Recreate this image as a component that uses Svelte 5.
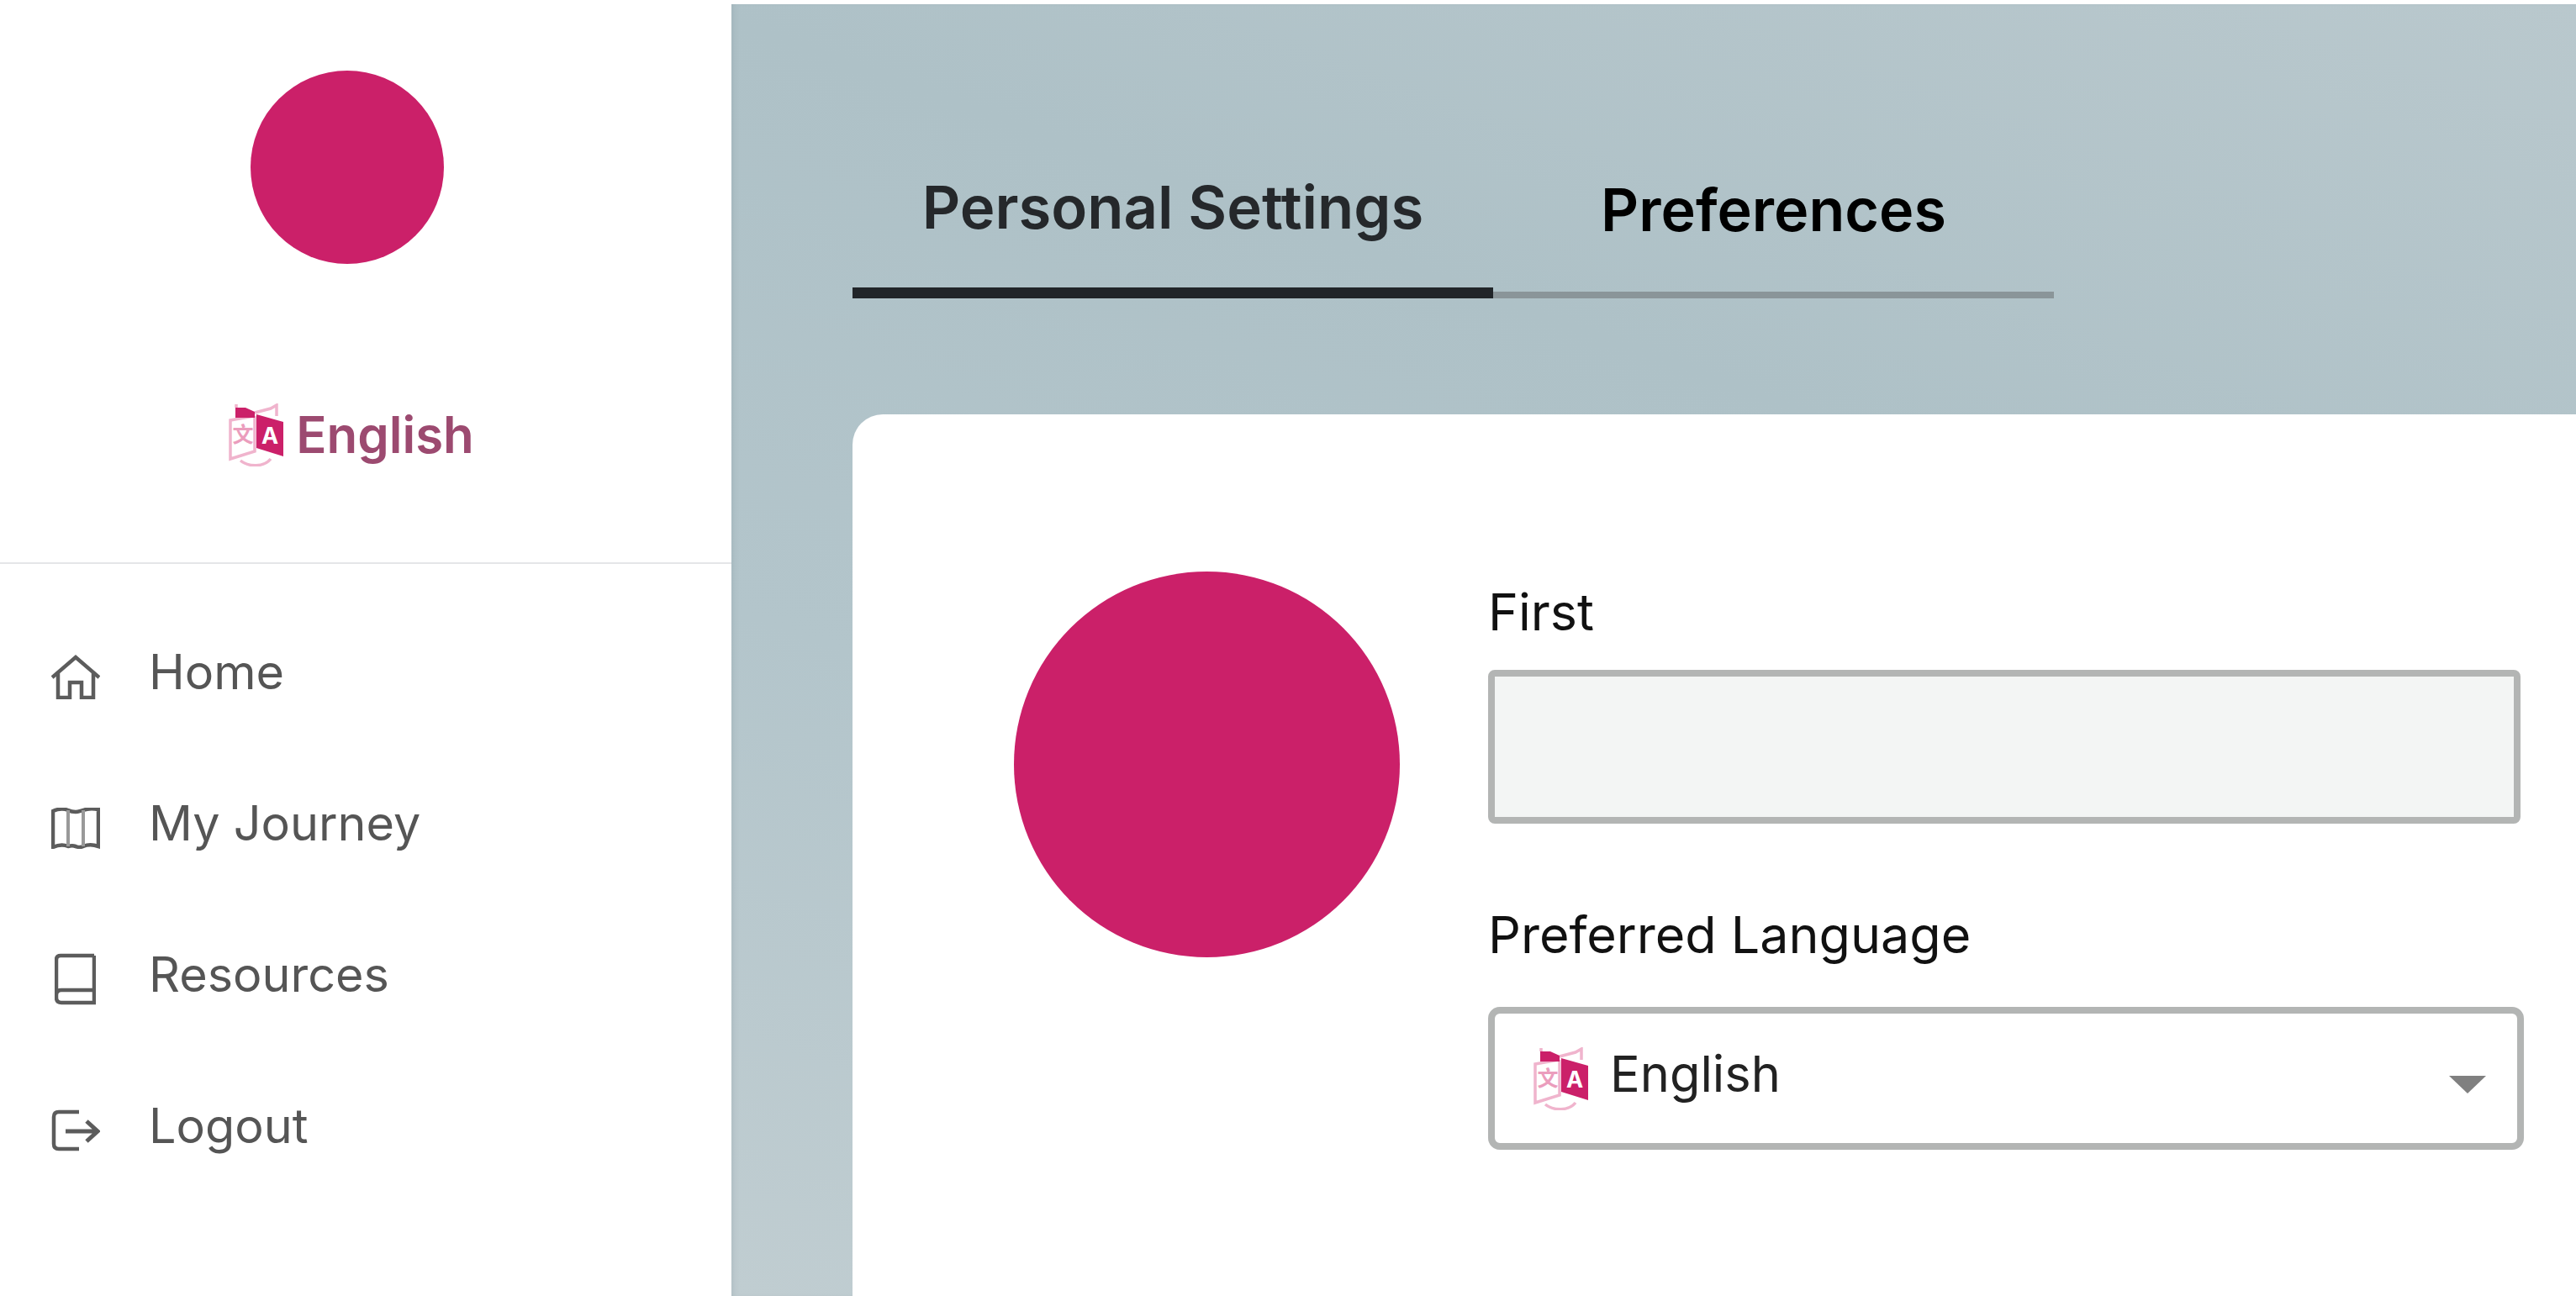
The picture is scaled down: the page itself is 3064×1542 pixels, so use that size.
<script>
  const navItems = [
    { label: 'Home', icon: 'home' },
    { label: 'My Journey', icon: 'map' },
    { label: 'Resources', icon: 'book' },
    { label: 'Logout', icon: 'logout' }
  ];

  let activeTab = 'personal';
  let first = '';
</script>

{#snippet langIcon()}
  <svg class="lang-icon" viewBox="0 0 67 75" aria-hidden="true">
    <path class="pale" d="M30 15 L2 20 V66 L31 57 V15" />
    <path class="pale" d="M31 11 L50 6 L57 2 V15" />
    <path class="pale" d="M14 68 C24 76 42 76 50 66" />
    <path class="pale" d="M9 1 V5" />
    <path class="solid" d="M8 5 H20 L31 10 V17 H8 Z" />
    <path class="solid" d="M33 13 L65 22 V63 L33 53 Z" />
    <text class="zh" x="17" y="46">文</text>
    <text class="en" x="49" y="48">A</text>
  </svg>
{/snippet}

<div class="page">
  <aside class="sidebar">
    <div class="brand">
      <div class="logo"></div>
      <button class="lang">
        {@render langIcon()}
        <span>English</span>
      </button>
    </div>
    <nav>
      {#each navItems as item}
        <a href="#{item.icon}" class="nav-item">
          <span class="nav-icon">
            {#if item.icon === 'home'}
              <svg width="58" height="53" viewBox="0 0 58 53">
                <path d="M1 27 L29 3 L57 27 M8 22 V51 H22 V33 H36 V51 H50 V22" />
              </svg>
            {:else if item.icon === 'map'}
              <svg width="58" height="49" viewBox="0 0 58 49">
                <path d="M2 4 C9 1 15 1 20 3 C24 5 26 5 29 5 C32 5 34 4 38 3 C43 1 50 1 56 2 V46 C50 44 43 44 38 46 C34 48 32 47 29 46 C26 45 24 45 20 46 C15 44 9 44 2 47 Z" />
                <path class="thin" d="M20 3 V46 M38 3 V46" />
              </svg>
            {:else if item.icon === 'book'}
              <svg class="book" width="49" height="62" viewBox="0 0 49 62">
                <path d="M47 3 H7 Q2 3 2 8 V53 Q2 59 8 59 H47 V3 M2 50 Q2 44 8 44 H47" />
              </svg>
            {:else}
              <svg width="58" height="50" viewBox="0 0 58 50">
                <path d="M33 3 H9 Q3 3 3 9 V41 Q3 47 9 47 H33" />
                <path class="arrow" d="M17 26 H54 M42 14 L55 26 L42 38" />
              </svg>
            {/if}
          </span>
          <span class="nav-label">{item.label}</span>
        </a>
      {/each}
    </nav>
  </aside>

  <main>
    <div class="tabs">
      <button class="tab personal" class:active={activeTab === 'personal'} onclick={() => (activeTab = 'personal')}>Personal Settings</button>
      <button class="tab prefs" class:active={activeTab === 'prefs'} onclick={() => (activeTab = 'prefs')}>Preferences</button>
    </div>

    <section class="card">
      <div class="avatar"></div>
      <div class="fields">
        <label class="field first">
          <span>First</span>
          <input bind:value={first} />
        </label>
        <div class="field second">
          <span>Preferred Language</span>
          <div class="select">
            {@render langIcon()}
            <span class="select-value">English</span>
            <span class="caret"></span>
          </div>
        </div>
      </div>
    </section>
  </main>
</div>

<style>
  :global(body) {
    margin: 0;
    background: #fff;
    font-family: Inter, "Liberation Sans", sans-serif;
  }

  .page {
    display: flex;
    width: 3064px;
    height: 1542px;
    overflow: hidden;
    background: #fff;
  }

  .sidebar {
    width: 870px;
    flex: none;
  }

  .brand {
    width: 825px;
    height: 669px;
    padding-right: 45px;
    border-bottom: 2px solid #e4e6e8;
    display: flex;
    flex-direction: column;
    align-items: center;
  }

  .logo {
    width: 230px;
    height: 230px;
    margin-top: 84px;
    border-radius: 50%;
    background: #cb2069;
  }

  .lang {
    display: flex;
    align-items: center;
    gap: 13px;
    margin-top: 166px;
    margin-left: 11px;
    padding: 0;
    border: none;
    background: none;
    color: #9c4a70;
    font: 600 60px Inter, sans-serif;
    line-height: 75px;
  }

  .lang-icon {
    width: 67px;
    height: 75px;
    flex: none;
  }

  .lang-icon .pale {
    fill: none;
    stroke: #f0b4cd;
    stroke-width: 3.5;
  }

  .lang-icon .solid {
    fill: #cb2069;
  }

  .lang-icon .zh {
    font: 700 25px "Noto Sans CJK SC", sans-serif;
    fill: #eb9dbd;
    text-anchor: middle;
  }

  .lang-icon .en {
    font: 700 27px Inter, sans-serif;
    fill: #fff;
    text-anchor: middle;
  }

  nav {
    display: flex;
    flex-direction: column;
    padding-top: 38px;
  }

  .nav-item {
    display: flex;
    align-items: center;
    height: 180px;
    padding-left: 61px;
    color: #555;
    text-decoration: none;
    font-size: 57.5px;
  }

  .nav-icon {
    width: 116px;
    flex: none;
    display: flex;
    align-items: center;
    padding-top: 12px;
  }

  .nav-icon svg {
    fill: none;
    stroke: #5c5c5c;
    stroke-width: 4.5;
  }

  .nav-icon .book {
    margin-left: 4px;
  }

  .nav-icon .thin {
    stroke-width: 4;
    stroke: #999;
  }

  .nav-icon .arrow {
    stroke-width: 5;
  }

  main {
    flex: 1;
    margin-top: 5px;
    padding: 0 0 0 144px;
    background: linear-gradient(200deg, #b9c8cd 0%, #aec1c7 35%, #b3c5cb 65%, #c0cdd1 100%);
    box-shadow: inset 6px 0 8px -6px rgba(90, 110, 120, 0.25);
  }

  .tabs {
    display: flex;
    width: 1429px;
    height: 350px;
    margin-bottom: 138px;
  }

  .tab {
    height: 350px;
    padding: 146px 0 0;
    border: none;
    border-bottom: 8px solid #8a9599;
    background: none;
    color: #000;
    font: 600 70px Inter, sans-serif;
  }

  .personal {
    width: 762px;
    padding-top: 146px;
    font-size: 70.6px;
  }

  .prefs {
    width: 667px;
  }

  .tab.active {
    border-bottom: 13px solid #212529;
    color: #25282b;
  }

  .card {
    display: flex;
    height: 1100px;
    padding: 187px 0 0 192px;
    background: #fff;
    border-radius: 36px 0 0 0;
  }

  .avatar {
    width: 459px;
    height: 459px;
    flex: none;
    border-radius: 50%;
    background: #cb2069;
  }

  .fields {
    margin-left: 105px;
    width: 1232px;
  }

  .field {
    display: block;
    color: #111;
    font-size: 61px;
  }

  .field > span {
    display: block;
    line-height: 72px;
  }

  .first {
    padding-top: 12px;
  }

  input {
    display: block;
    width: 1228px;
    height: 183px;
    box-sizing: border-box;
    margin-top: 33px;
    border: 8px solid #b3b5b4;
    border-radius: 8px;
    background: #f3f5f4;
    outline: none;
  }

  .second {
    margin-top: 96px;
  }

  .select {
    display: flex;
    align-items: center;
    position: relative;
    height: 170px;
    box-sizing: border-box;
    margin-top: 50px;
    padding-left: 46px;
    border: 8px solid #b3b5b4;
    border-radius: 14px;
    background: #fff;
  }

  .select-value {
    margin-left: 24px;
    margin-top: -12px;
    font-size: 59.5px;
    color: #222;
  }

  .caret {
    position: absolute;
    right: 37px;
    top: 74px;
    width: 0;
    height: 0;
    border-left: 22px solid transparent;
    border-right: 22px solid transparent;
    border-top: 21px solid #808080;
  }
</style>
